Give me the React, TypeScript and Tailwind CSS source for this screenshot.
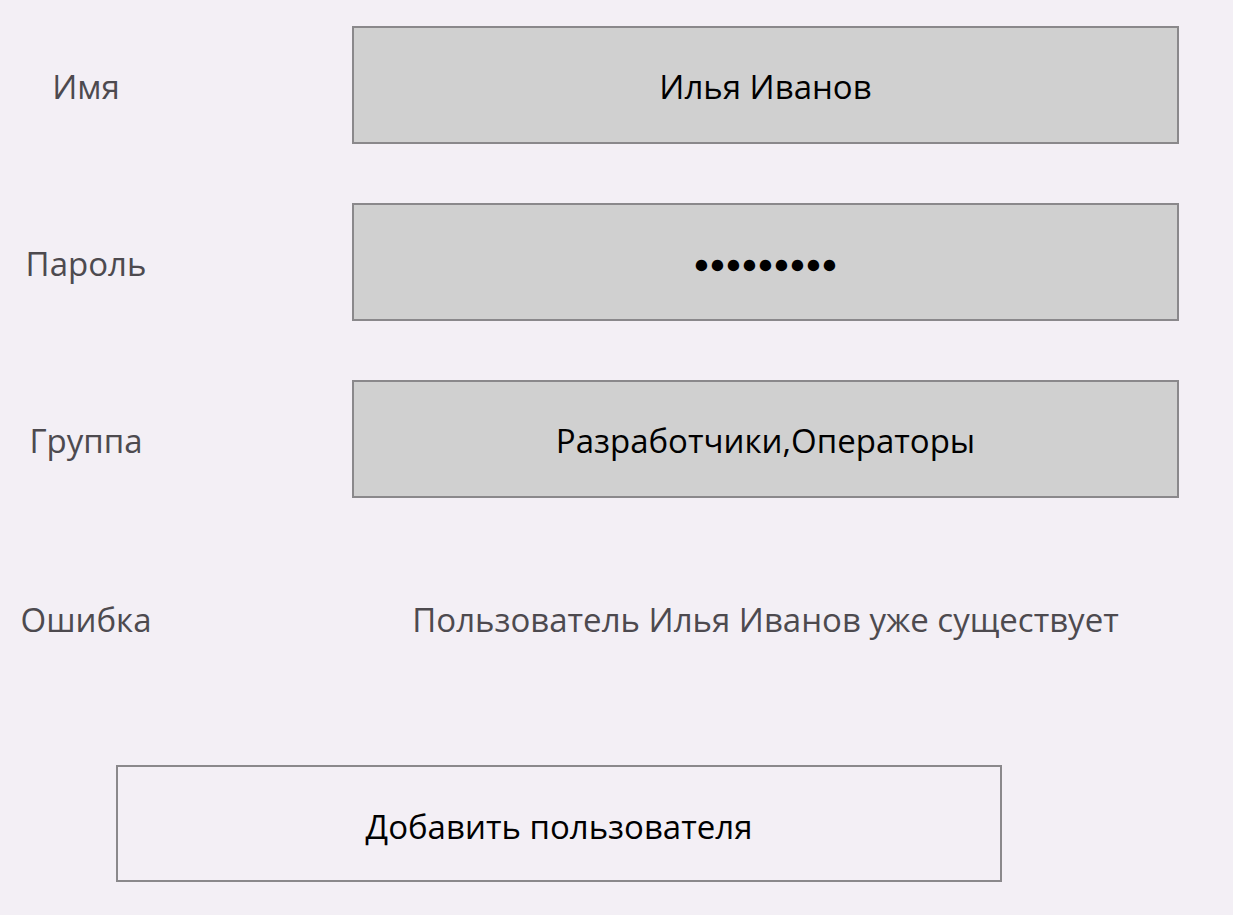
const rows = [
  { label: "Имя", value: "Илья Иванов", dots: false },
  { label: "Пароль", value: "●●●●●●●●●", dots: true },
  { label: "Группа", value: "Разработчики,Операторы", dots: false },
];

const App = () => {
  return (
    <div
      className="min-h-[915px] w-[1233px] bg-[#f3eff5] pt-[26px]"
      style={{ fontFamily: '"Open Sans", "Noto Sans", sans-serif' }}
    >
      <div className="flex flex-col gap-[59px]">
        {rows.map((r) => (
          <div key={r.label} className="flex items-center">
            <div className="w-[172px] pt-[4px] text-center text-[33px] text-[#4d4a4f]">{r.label}</div>
            <div
              className={`ml-[180px] flex h-[118px] w-[827px] items-center justify-center border-2 border-[#8a888b] bg-[#d0d0d0] pt-[4px] text-black ${
                r.dots ? "text-[26.5px]" : "text-[33px]"
              }`}
            >
              {r.value}
            </div>
          </div>
        ))}
        <div className="flex h-[118px] items-center pt-[8px]">
          <div className="w-[172px] text-center text-[33px] text-[#4d4a4f]">Ошибка</div>
          <div className="ml-[180px] w-[827px] text-center text-[33px] text-[#4d4a4f]">
            Пользователь Илья Иванов уже существует
          </div>
        </div>
      </div>
      <button className="ml-[116px] mt-[90px] flex h-[117px] w-[886px] items-center justify-center border-2 border-[#8a888b] bg-transparent pt-[6px] text-[33px] text-black">
        Добавить пользователя
      </button>
    </div>
  );
};

export default App;
